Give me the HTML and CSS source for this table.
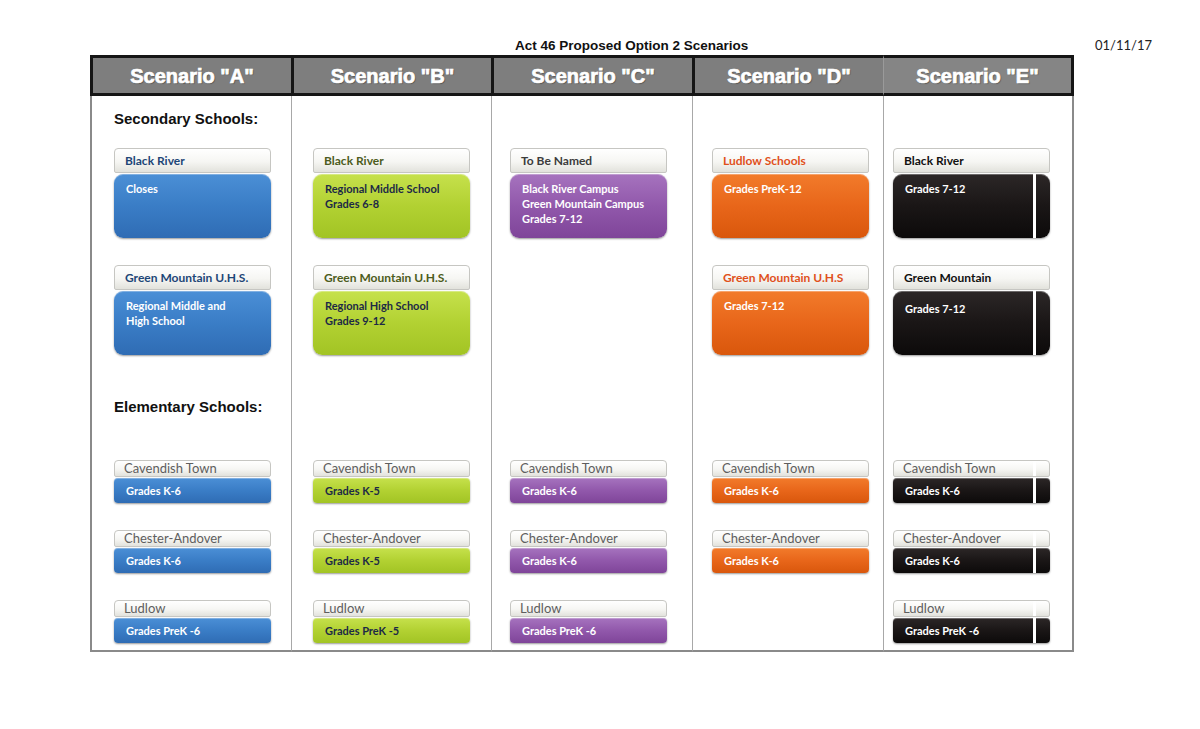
FILE: index.html
```html
<!DOCTYPE html>
<html lang="en">
<head>
  <meta charset="UTF-8">
  <meta name="viewport" content="width=device-width, initial-scale=1.0">
  <title>Act 46 Proposed Option 2 Scenarios</title>
  <link rel="stylesheet" href="styles.css">
</head>
<body>
  <div class="page">
    <div class="topline">
      <span class="title">Act 46 Proposed Option 2 Scenarios</span>
      <span class="date">01/11/17</span>
    </div>

    <div class="grid">
      <div class="head">Scenario "A"</div>
      <div class="head">Scenario "B"</div>
      <div class="head">Scenario "C"</div>
      <div class="head">Scenario "D"</div>
      <div class="head head-e">Scenario "E"</div>

      <!-- Scenario A -->
      <div class="col col-a blue">
        <div class="section"><h2>Secondary Schools:</h2></div>
        <div class="slot-big">
          <div class="tab">Black River</div>
          <div class="box">Closes</div>
        </div>
        <div class="slot-big">
          <div class="tab">Green Mountain U.H.S.</div>
          <div class="box">Regional Middle and<br>High School</div>
        </div>
        <div class="section section-2"><h2>Elementary Schools:</h2></div>
        <div class="slot-small">
          <div class="tab">Cavendish Town</div>
          <div class="box">Grades K-6</div>
        </div>
        <div class="slot-small">
          <div class="tab">Chester-Andover</div>
          <div class="box">Grades K-6</div>
        </div>
        <div class="slot-small">
          <div class="tab">Ludlow</div>
          <div class="box">Grades PreK -6</div>
        </div>
      </div>

      <!-- Scenario B -->
      <div class="col col-b green">
        <div class="section"></div>
        <div class="slot-big">
          <div class="tab">Black River</div>
          <div class="box">Regional Middle School<br>Grades 6-8</div>
        </div>
        <div class="slot-big">
          <div class="tab">Green Mountain U.H.S.</div>
          <div class="box">Regional High School<br>Grades 9-12</div>
        </div>
        <div class="section section-2"></div>
        <div class="slot-small">
          <div class="tab">Cavendish Town</div>
          <div class="box">Grades K-5</div>
        </div>
        <div class="slot-small">
          <div class="tab">Chester-Andover</div>
          <div class="box">Grades K-5</div>
        </div>
        <div class="slot-small">
          <div class="tab">Ludlow</div>
          <div class="box">Grades PreK -5</div>
        </div>
      </div>

      <!-- Scenario C -->
      <div class="col col-c purple">
        <div class="section"></div>
        <div class="slot-big">
          <div class="tab">To Be Named</div>
          <div class="box">Black River Campus<br>Green Mountain Campus<br>Grades 7-12</div>
        </div>
        <div class="slot-big"></div>
        <div class="section section-2"></div>
        <div class="slot-small">
          <div class="tab">Cavendish Town</div>
          <div class="box">Grades K-6</div>
        </div>
        <div class="slot-small">
          <div class="tab">Chester-Andover</div>
          <div class="box">Grades K-6</div>
        </div>
        <div class="slot-small">
          <div class="tab">Ludlow</div>
          <div class="box">Grades PreK -6</div>
        </div>
      </div>

      <!-- Scenario D -->
      <div class="col col-d orange">
        <div class="section"></div>
        <div class="slot-big">
          <div class="tab">Ludlow Schools</div>
          <div class="box">Grades PreK-12</div>
        </div>
        <div class="slot-big">
          <div class="tab">Green Mountain U.H.S</div>
          <div class="box">Grades 7-12</div>
        </div>
        <div class="section section-2"></div>
        <div class="slot-small">
          <div class="tab">Cavendish Town</div>
          <div class="box">Grades K-6</div>
        </div>
        <div class="slot-small">
          <div class="tab">Chester-Andover</div>
          <div class="box">Grades K-6</div>
        </div>
      </div>

      <!-- Scenario E -->
      <div class="col col-e black">
        <div class="section"></div>
        <div class="slot-big">
          <div class="tab">Black River</div>
          <div class="box">Grades 7-12</div>
        </div>
        <div class="slot-big">
          <div class="tab">Green Mountain</div>
          <div class="box box-low">Grades 7-12</div>
        </div>
        <div class="section section-2"></div>
        <div class="slot-small">
          <div class="tab">Cavendish Town</div>
          <div class="box">Grades K-6</div>
        </div>
        <div class="slot-small">
          <div class="tab">Chester-Andover</div>
          <div class="box">Grades K-6</div>
        </div>
        <div class="slot-small">
          <div class="tab">Ludlow</div>
          <div class="box">Grades PreK -6</div>
        </div>
      </div>
    </div>
  </div>
</body>
</html>
```

FILE: styles.css
```css
body {
  margin: 0;
  background-color: #fff;
  font-family: "Liberation Sans", Arial, sans-serif;
  color: #111;
}
.page {
  width: 1200px;
  height: 729px;
  padding-left: 90px;
  box-sizing: border-box;
}
.topline {
  display: flex;
  align-items: baseline;
  height: 55px;
  box-sizing: border-box;
  padding-top: 37px;
}
.title {
  margin-left: 425px;
  font-size: 13.5px;
  font-weight: bold;
  line-height: 16px;
}
.date {
  margin-left: auto;
  margin-right: 48px;
  font-family: Lato, "Liberation Sans", sans-serif;
  font-size: 13px;
  color: #222;
}

.grid {
  display: grid;
  grid-template-columns: 201px 200px 201px 191px 191px;
  grid-template-rows: 41px 556px;
}
.head {
  box-sizing: border-box;
  background-color: #7e7e7e;
  border-top: 3px solid #151515;
  border-bottom: 3px solid #151515;
  border-left: 3px solid #151515;
  padding-top: 2px;
  color: #fff;
  font-size: 20px;
  font-weight: bold;
  line-height: 33px;
  text-align: center;
  -webkit-text-stroke: 0.7px #fff;
  text-shadow: 1px 1px 1px rgba(0, 0, 0, 0.35);
}
.head-e {
  background-color: #858585;
  border-left: 1px solid #9a9a9a;
  border-right: 3px solid #151515;
}

.col {
  box-sizing: border-box;
  border-left: 1px solid #a8a8a8;
  border-bottom: 2px solid #8a8a8a;
  display: flex;
  flex-direction: column;
}
.col-a { border-left: 2px solid #8a8a8a; padding-left: 22px; }
.col-b { padding-left: 21px; }
.col-c { padding-left: 18px; }
.col-d { padding-left: 19px; }
.col-e { padding-left: 9px; border-right: 2px solid #8a8a8a; }

.section {
  flex-shrink: 0;
  height: 52px;
  box-sizing: border-box;
  padding-top: 14px;
}
.section-2 {
  height: 78px;
  padding-top: 16px;
}
.section h2 {
  margin: 0;
  font-size: 15px;
  line-height: 18px;
  font-weight: bold;
  color: #111;
}

.slot-big { flex-shrink: 0; height: 117px; }
.slot-small { flex-shrink: 0; height: 70px; }
.slot-small:last-child { height: auto; }

.tab {
  width: 157px;
  box-sizing: border-box;
  border: 1px solid #c6c6c2;
  border-radius: 4px 4px 2px 2px;
  background: linear-gradient(#ffffff, #f6f6f3 55%, #e2e2dc);
  font-family: Lato, "Liberation Sans", sans-serif;
  white-space: nowrap;
}
.slot-big .tab {
  height: 25px;
  padding-left: 10px;
  font-size: 12px;
  font-weight: bold;
  line-height: 24px;
}

.box {
  width: 157px;
  box-sizing: border-box;
  margin-top: 1px;
  font-family: Lato, "Liberation Sans", sans-serif;
  font-size: 11px;
  font-weight: bold;
  color: #fff;
  box-shadow: 0 1px 2px rgba(0, 0, 0, 0.4), inset 0 1px 0 rgba(255, 255, 255, 0.3);
}
.slot-big .box {
  height: 64px;
  border-radius: 9px;
  padding: 7px 12px 0;
  line-height: 15px;
}
.slot-big .box-low {
  padding-top: 10px;
}
.slot-small .box {
  height: 25px;
  border-radius: 4px;
  padding-left: 12px;
  line-height: 25px;
}

.blue .tab { color: #1d4677; }
.blue .box { background: linear-gradient(#4b8fd6, #3a7dc6 50%, #2f6cb4); }

.green .tab { color: #4c5c20; }
.green .box {
  background: linear-gradient(#c6e14c, #b2d132 50%, #a2c424);
  color: #1c2946;
}

.purple .tab { color: #3c3c3c; }
.purple .box { background: linear-gradient(#a673be, #9158ab 50%, #7f4599); }

.orange .tab { color: #e0501b; }
.orange .box { background: linear-gradient(#f27b2b, #e8661a 50%, #d9570c); }

.black .tab { color: #111; }
.black .box {
  background:
    linear-gradient(to right, transparent 140px, #fff 140px, #fff 143px, transparent 143px),
    linear-gradient(#2c2727, #1a1616 50%, #0c0a0a);
}

/* elementary tabs are plain grey in every scenario */
.col .slot-small .tab {
  height: 17px;
  padding-left: 9px;
  font-size: 13px;
  line-height: 14px;
  color: #5e5e5e;
}
.black .slot-small .tab {
  background:
    linear-gradient(to right, transparent 139px, #fff 139px, #fff 142px, transparent 142px),
    linear-gradient(#ffffff, #f6f6f3 55%, #e2e2dc);
}
```
